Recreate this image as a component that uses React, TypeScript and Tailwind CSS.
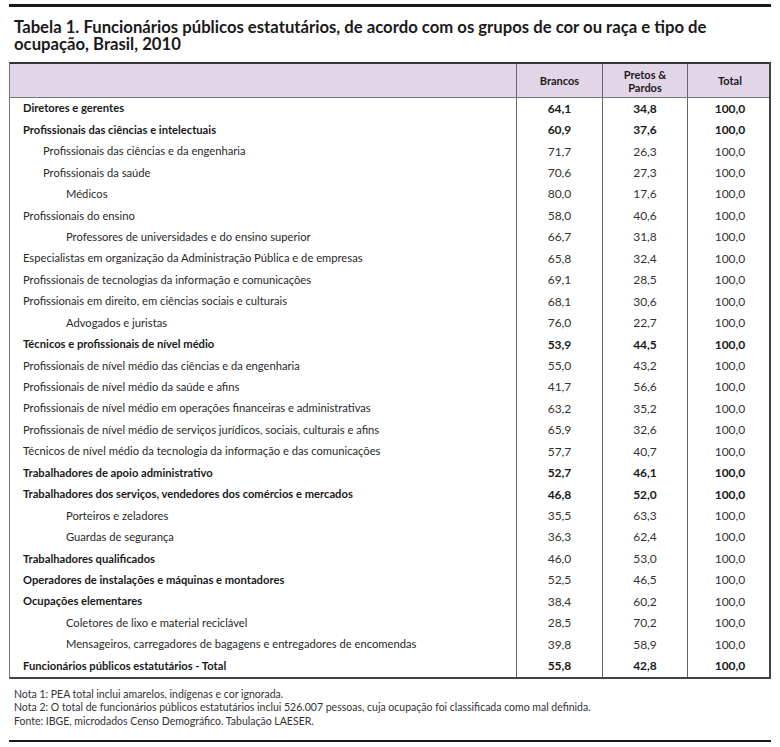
import React from 'react';

type Row = {
  label: string;
  level: 0 | 1 | 2;
  bold?: boolean;
  boldNums?: boolean;
  b: string;
  p: string;
  t: string;
};

const rows: Row[] = [
  { label: 'Diretores e gerentes', level: 0, bold: true, boldNums: true, b: '64,1', p: '34,8', t: '100,0' },
  { label: 'Profissionais das ciências e intelectuais', level: 0, bold: true, boldNums: true, b: '60,9', p: '37,6', t: '100,0' },
  { label: 'Profissionais das ciências e da engenharia', level: 1, b: '71,7', p: '26,3', t: '100,0' },
  { label: 'Profissionais da saúde', level: 1, b: '70,6', p: '27,3', t: '100,0' },
  { label: 'Médicos', level: 2, b: '80,0', p: '17,6', t: '100,0' },
  { label: 'Profissionais do ensino', level: 0, b: '58,0', p: '40,6', t: '100,0' },
  { label: 'Professores de universidades e do ensino superior', level: 2, b: '66,7', p: '31,8', t: '100,0' },
  { label: 'Especialistas em organização da Administração Pública e de empresas', level: 0, b: '65,8', p: '32,4', t: '100,0' },
  { label: 'Profissionais de tecnologias da informação e comunicações', level: 0, b: '69,1', p: '28,5', t: '100,0' },
  { label: 'Profissionais em direito, em ciências sociais e culturais', level: 0, b: '68,1', p: '30,6', t: '100,0' },
  { label: 'Advogados e juristas', level: 2, b: '76,0', p: '22,7', t: '100,0' },
  { label: 'Técnicos e profissionais de nível médio', level: 0, bold: true, boldNums: true, b: '53,9', p: '44,5', t: '100,0' },
  { label: 'Profissionais de nível médio das ciências e da engenharia', level: 0, b: '55,0', p: '43,2', t: '100,0' },
  { label: 'Profissionais de nível médio da saúde e afins', level: 0, b: '41,7', p: '56,6', t: '100,0' },
  { label: 'Profissionais de nível médio em operações financeiras e administrativas', level: 0, b: '63,2', p: '35,2', t: '100,0' },
  { label: 'Profissionais de nível médio de serviços jurídicos, sociais, culturais e afins', level: 0, b: '65,9', p: '32,6', t: '100,0' },
  { label: 'Técnicos de nível médio da tecnologia da informação e das comunicações', level: 0, b: '57,7', p: '40,7', t: '100,0' },
  { label: 'Trabalhadores de apoio administrativo', level: 0, bold: true, boldNums: true, b: '52,7', p: '46,1', t: '100,0' },
  { label: 'Trabalhadores dos serviços, vendedores dos comércios e mercados', level: 0, bold: true, boldNums: true, b: '46,8', p: '52,0', t: '100,0' },
  { label: 'Porteiros e zeladores', level: 2, b: '35,5', p: '63,3', t: '100,0' },
  { label: 'Guardas de segurança', level: 2, b: '36,3', p: '62,4', t: '100,0' },
  { label: 'Trabalhadores qualificados', level: 0, bold: true, b: '46,0', p: '53,0', t: '100,0' },
  { label: 'Operadores de instalações e máquinas e montadores', level: 0, bold: true, b: '52,5', p: '46,5', t: '100,0' },
  { label: 'Ocupações elementares', level: 0, bold: true, b: '38,4', p: '60,2', t: '100,0' },
  { label: 'Coletores de lixo e material reciclável', level: 2, b: '28,5', p: '70,2', t: '100,0' },
  { label: 'Mensageiros, carregadores de bagagens e entregadores de encomendas', level: 2, b: '39,8', p: '58,9', t: '100,0' },
  { label: 'Funcionários públicos estatutários - Total', level: 0, bold: true, boldNums: true, b: '55,8', p: '42,8', t: '100,0' },
];

const indent = ['pl-[13px]', 'pl-[33px]', 'pl-[56px]'];

const cols = 'grid grid-cols-[506px_86px_85px_85px]';

export default function App() {
  return (
    <div className="w-[780px] h-[747px] bg-white px-[9px] pt-[4px] text-[#1a1a1a] font-['Lato','Liberation_Sans',sans-serif]">
      <div className="h-[3px] bg-[#1a1a1a]" />
      <h1 className="mt-[12px] pl-[5px] text-[16.7px] leading-[17px] font-bold">
        Tabela 1. Funcionários públicos estatutários, de acordo com os grupos de cor ou raça e tipo de ocupação, Brasil, 2010
      </h1>

      <div className="mt-[9px] border-t-2 border-l border-r-2 border-b-2 border-t-[#333] border-l-[#777] border-r-[#444] border-b-[#444]">
        <div className={`${cols} h-[34px] bg-[#e2d5e8] border-b border-[#777] text-[11px] font-bold leading-[13px]`}>
          <div />
          <div className="border-l border-[#666] flex items-center justify-center">Brancos</div>
          <div className="border-l border-[#666] flex items-center justify-center text-center">
            Pretos &amp;<br />Pardos
          </div>
          <div className="border-l border-[#666] flex items-center justify-center">Total</div>
        </div>

        {rows.map((r, i) => (
          <div key={i} className={`${cols} h-[21.45px] items-stretch`}>
            <div className={`${indent[r.level]} flex items-center text-[11.2px] ${r.bold ? 'font-bold' : 'font-normal text-[#2a2a2a]'}`}>
              {r.label}
            </div>
            {[r.b, r.p, r.t].map((v, j) => (
              <div
                key={j}
                className={`border-l border-[#666] flex items-center justify-center ${r.boldNums ? 'font-bold text-[12px]' : 'text-[12px] text-[#333]'}`}
              >
                {v}
              </div>
            ))}
          </div>
        ))}
      </div>

      <div className="mt-[9px] pl-[5px] text-[10.5px] leading-[13.5px] text-[#333]">
        <p>Nota 1: PEA total inclui amarelos, indígenas e cor ignorada.</p>
        <p>Nota 2: O total de funcionários públicos estatutários inclui 526.007 pessoas, cuja ocupação foi classificada como mal definida.</p>
        <p>Fonte: IBGE, microdados Censo Demográfico. Tabulação LAESER.</p>
      </div>

      <div className="mt-[12px] h-[2px] bg-[#1a1a1a]" />
    </div>
  );
}
